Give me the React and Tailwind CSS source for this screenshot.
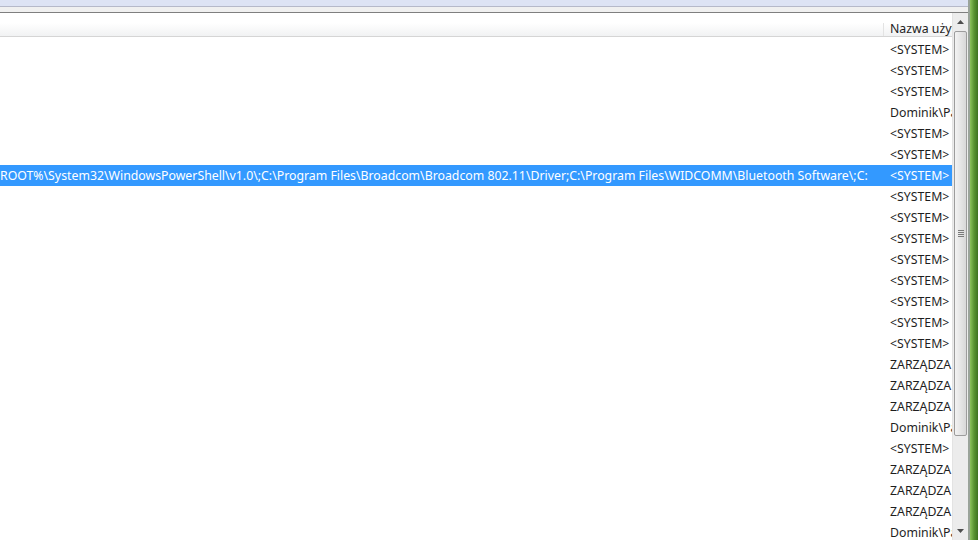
import React from 'react';

const rows = [
  '<SYSTEM>', '<SYSTEM>', '<SYSTEM>', 'Dominik\\Pa', '<SYSTEM>', '<SYSTEM>', '<SYSTEM>',
  '<SYSTEM>', '<SYSTEM>', '<SYSTEM>', '<SYSTEM>', '<SYSTEM>', '<SYSTEM>', '<SYSTEM>',
  '<SYSTEM>', 'ZARZĄDZA', 'ZARZĄDZA', 'ZARZĄDZA', 'Dominik\\Pa', '<SYSTEM>',
  'ZARZĄDZA', 'ZARZĄDZA', 'ZARZĄDZA', 'Dominik\\Pa',
];

const PATH =
  'ROOT%\\System32\\WindowsPowerShell\\v1.0\\;C:\\Program Files\\Broadcom\\Broadcom 802.11\\Driver;C:\\Program Files\\WIDCOMM\\Bluetooth Software\\;C:';

function Row({ user, selected }) {
  return (
    <div className={`flex shrink-0 h-[21px] pt-[1px] items-center ${selected ? 'bg-[#3399ff] text-white' : 'text-[#1e1e1e]'}`}>
      <div className="flex-1 overflow-hidden whitespace-nowrap">
        {selected ? PATH : ''}
      </div>
      <div className="w-[68px] overflow-hidden whitespace-nowrap pl-[6px]">{user}</div>
    </div>
  );
}

function Scrollbar() {
  return (
    <div className="w-[16px] flex flex-col bg-[#ececec] border-l border-[#e3e3e3]">
      <div className="h-[18px] shrink-0 flex items-center justify-center">
        <svg width="7" height="4" viewBox="0 0 7 4"><path d="M0 4 L3.5 0 L7 4 Z" fill="#4d4d4d" /></svg>
      </div>
      <div className="mx-[1px] shrink-0 h-[405px] rounded-[2px] border border-[#9c9c9c] bg-gradient-to-r from-[#f3f3f3] to-[#d8d8d8] flex items-center justify-center">
        <div className="flex flex-col gap-[1px]">
          <div className="w-[6px] h-[1px] bg-[#7a7a7a]" />
          <div className="w-[6px] h-[1px] bg-[#7a7a7a]" />
          <div className="w-[6px] h-[1px] bg-[#7a7a7a]" />
          <div className="w-[6px] h-[1px] bg-[#7a7a7a]" />
        </div>
      </div>
      <div className="flex-1" />
      <div className="h-[18px] shrink-0 flex items-center justify-center">
        <svg width="7" height="4" viewBox="0 0 7 4"><path d="M0 0 L3.5 4 L7 0 Z" fill="#4d4d4d" /></svg>
      </div>
    </div>
  );
}

export default function App() {
  return (
    <div
      className="w-[978px] h-[540px] overflow-hidden flex bg-white text-[12.3px]"
      style={{ fontFamily: '"Segoe UI", "Noto Sans", "Open Sans", sans-serif' }}
    >
      <div className="flex-1 flex flex-col min-w-0">
        <div className="h-[7px] shrink-0 bg-[#dde3f4] border-b border-[#b6b9c9]" />
        <div className="h-[6px] shrink-0 bg-[#f0f0f0] border-b border-[#7f7f7f]" />
        <div className="flex-1 flex min-h-0 overflow-hidden">
          <div className="flex-1 flex flex-col min-w-0">
            <div className="h-[10px] shrink-0" />
            <div className="h-[14px] shrink-0 flex bg-gradient-to-b from-[#ffffff] to-[#f1f2f3] border-b border-[#d5d5d5]">
              <div className="flex-1 border-r border-[#e3e3e3]" />
              <div className="w-[68px] pl-[6px] leading-[11px] text-[#1e1e1e] whitespace-nowrap overflow-hidden">Nazwa użytkownika</div>
            </div>
            <div className="h-[2px] shrink-0" />
            {rows.map((u, i) => (
              <Row key={i} user={u} selected={i === 6} />
            ))}
          </div>
          <Scrollbar />
        </div>
      </div>
      <div className="w-[2px] bg-[#9aa39a]" />
      <div className="w-[8px] bg-gradient-to-r from-[#8dc35c] via-[#5a9431] to-[#3f7320]" />
    </div>
  );
}
